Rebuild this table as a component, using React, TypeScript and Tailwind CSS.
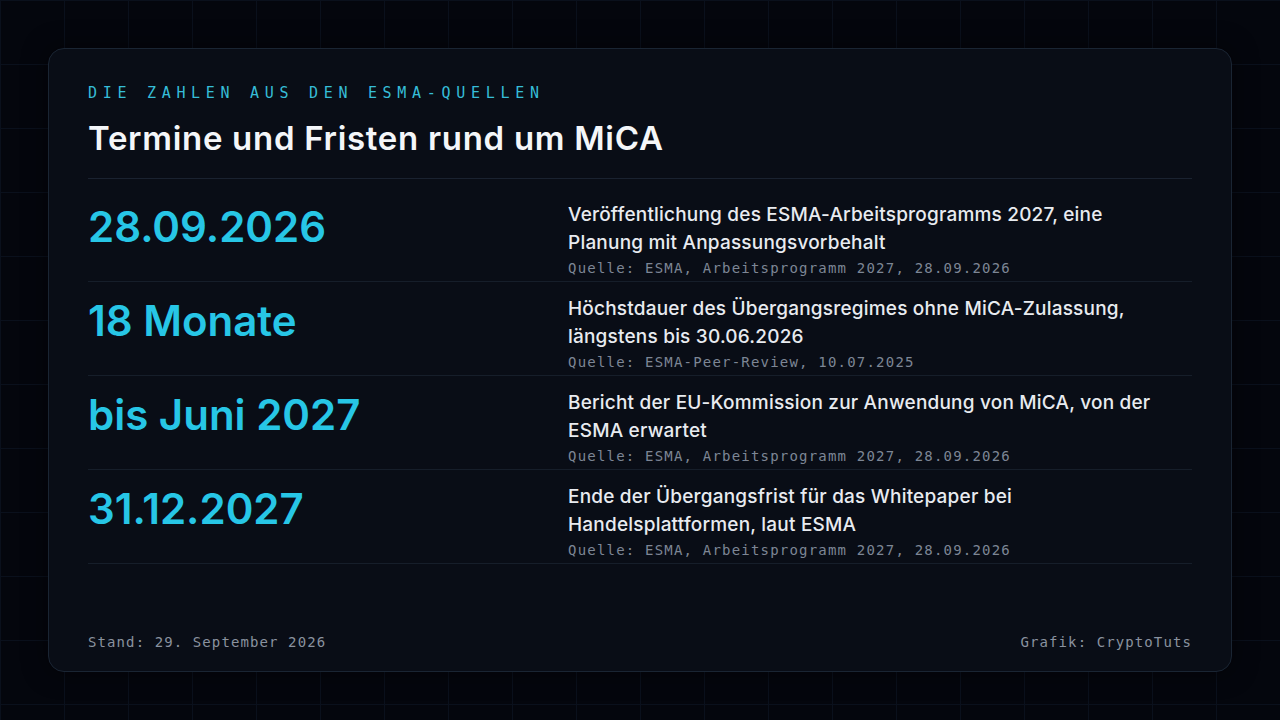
const rows = [
  {
    value: "28.09.2026",
    text: "Veröffentlichung des ESMA-Arbeitsprogramms 2027, eine Planung mit Anpassungsvorbehalt",
    source: "Quelle: ESMA, Arbeitsprogramm 2027, 28.09.2026",
  },
  {
    value: "18 Monate",
    text: "Höchstdauer des Übergangsregimes ohne MiCA-Zulassung, längstens bis 30.06.2026",
    source: "Quelle: ESMA-Peer-Review, 10.07.2025",
  },
  {
    value: "bis Juni 2027",
    text: "Bericht der EU-Kommission zur Anwendung von MiCA, von der ESMA erwartet",
    source: "Quelle: ESMA, Arbeitsprogramm 2027, 28.09.2026",
  },
  {
    value: "31.12.2027",
    text: "Ende der Übergangsfrist für das Whitepaper bei Handelsplattformen, laut ESMA",
    source: "Quelle: ESMA, Arbeitsprogramm 2027, 28.09.2026",
  },
];

const sans = "font-['Inter','Noto_Sans',sans-serif]";
const mono = "font-['DejaVu_Sans_Mono','Liberation_Mono',monospace]";

export default function App() {
  return (
    <div className="h-[720px] w-[1280px] bg-[#04060d] bg-[linear-gradient(to_right,#0a101c_1px,transparent_1px),linear-gradient(to_bottom,#0a101c_1px,transparent_1px)] bg-[size:64px_64px] p-[48px]">
      <div className="flex h-[624px] flex-col rounded-[16px] border border-[#1a2533] bg-[#090d16] px-[39px] pt-[34px] pb-[19px] shadow-[0_0_24px_rgba(0,0,0,0.5)]">
        {/* Header */}
        <div className="border-b border-[#1a2230] pb-[20px]">
          <p className={`${mono} text-[15px] leading-[20px] tracking-[5.7px] text-[#36bdd8]`}>
            DIE ZAHLEN AUS DEN ESMA-QUELLEN
          </p>
          <h1 className={`${sans} mt-[15px] text-[33px] leading-[40px] font-semibold tracking-[0.7px] text-[#f4f6f9]`}>
            Termine und Fristen rund um MiCA
          </h1>
        </div>

        {/* Rows */}
        <div className="mt-[9px]">
          {rows.map((row) => (
            <div
              key={row.value + row.text}
              className="grid grid-cols-[480px_minmax(0,1fr)] border-b border-[#161e2a] pt-[13px] pb-[3px]"
            >
              <div className={`${sans} text-[42px] leading-[52px] font-semibold text-[#27c6e6]`}>
                {row.value}
              </div>
              <div className="max-w-[600px]">
                <p className={`${sans} text-[19px] leading-[28px] font-medium tracking-[0.2px] text-[#e8ebf0]`}>
                  {row.text}
                </p>
                <p className={`${mono} mt-[2px] text-[14px] leading-[19px] tracking-[1.2px] text-[#7d8695]`}>
                  {row.source}
                </p>
              </div>
            </div>
          ))}
        </div>

        {/* Footer */}
        <div className={`${mono} mt-auto flex justify-between text-[14px] leading-[20px] tracking-[1.1px] text-[#8a929f]`}>
          <span>Stand: 29. September 2026</span>
          <span>Grafik: CryptoTuts</span>
        </div>
      </div>
    </div>
  );
}
